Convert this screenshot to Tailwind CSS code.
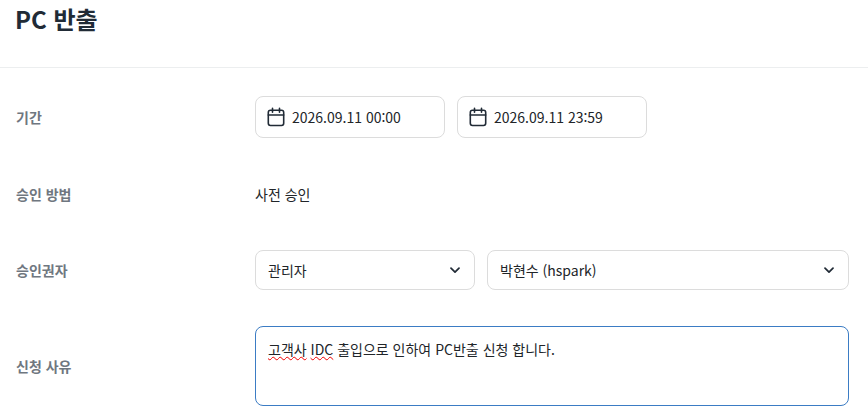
<!DOCTYPE html>
<html lang="ko">
<head>
  <meta charset="UTF-8" />
  <meta name="viewport" content="width=device-width, initial-scale=1.0" />
  <title>PC 반출</title>
  <script src="https://cdn.jsdelivr.net/npm/@tailwindcss/browser@4"></script>
</head>
<body class="bg-white h-[418px] overflow-hidden font-['Noto_Sans_CJK_KR','Noto_Sans',sans-serif] text-[14px] text-[#212529]">
  <!-- Header -->
  <div class="h-[68px] border-b border-[#eceeef] pl-4">
    <h1 class="pt-[1px] -ml-[1px] text-[24px] leading-9 font-bold text-[#212b36]">PC 반출</h1>
  </div>

  <!-- Form -->
  <div class="pt-7 pl-4 pr-[19px] flex flex-col gap-9">
    <div class="grid grid-cols-[239px_1fr] items-center">
      <div class="text-[14px] font-bold text-[#6f7780]">기간</div>
      <div class="flex gap-3">
        <div class="w-[190px] h-[42px] flex items-center gap-[7px] pl-[11px] border border-[#dcdcdc] rounded-lg">
          <svg class="w-[18px] h-[20px]" viewBox="0 0 18 20" fill="none" stroke="#212b36" stroke-width="1.6" stroke-linecap="round" stroke-linejoin="round"><rect x="1.3" y="3.3" width="15.4" height="15.2" rx="2.2"/><path d="M1.3 8h15.4M5.5 1.2v4M12.5 1.2v4"/></svg>
          <span>2026.09.11 00:00</span>
        </div>
        <div class="w-[190px] h-[42px] flex items-center gap-[7px] pl-[11px] border border-[#dcdcdc] rounded-lg">
          <svg class="w-[18px] h-[20px]" viewBox="0 0 18 20" fill="none" stroke="#212b36" stroke-width="1.6" stroke-linecap="round" stroke-linejoin="round"><rect x="1.3" y="3.3" width="15.4" height="15.2" rx="2.2"/><path d="M1.3 8h15.4M5.5 1.2v4M12.5 1.2v4"/></svg>
          <span>2026.09.11 23:59</span>
        </div>
      </div>
    </div>

    <div class="grid grid-cols-[239px_1fr] items-center h-10">
      <div class="text-[14px] font-bold text-[#6f7780]">승인 방법</div>
      <div>사전 승인</div>
    </div>

    <div class="grid grid-cols-[239px_1fr] items-center">
      <div class="text-[14px] font-bold text-[#6f7780]">승인권자</div>
      <div class="flex gap-3">
        <div class="w-[220px] h-10 flex items-center justify-between pl-3 pr-[14px] border border-[#dcdcdc] rounded-lg">
          <span>관리자</span>
          <svg class="w-[10px] h-[7px]" viewBox="0 0 10 7" fill="none" stroke="#212b36" stroke-width="1.7" stroke-linecap="round" stroke-linejoin="round"><path d="M1 1.2 5 5.2l4-4"/></svg>
        </div>
        <div class="flex-1 h-10 flex items-center justify-between pl-3 pr-[14px] border border-[#dcdcdc] rounded-lg">
          <span>박현수 (hspark)</span>
          <svg class="w-[10px] h-[7px]" viewBox="0 0 10 7" fill="none" stroke="#212b36" stroke-width="1.7" stroke-linecap="round" stroke-linejoin="round"><path d="M1 1.2 5 5.2l4-4"/></svg>
        </div>
      </div>
    </div>

    <div class="grid grid-cols-[239px_1fr] items-center">
      <div class="text-[14px] font-bold text-[#6f7780]">신청 사유</div>
      <div class="h-20 px-3 py-[12px] leading-[21px] border border-[#3b7cc4] rounded-lg">
        <span class="underline decoration-wavy decoration-[#f00000] decoration-1">고객사</span> <span class="underline decoration-wavy decoration-[#f00000] decoration-1">IDC</span> 출입으로 인하여 PC반출 신청 합니다.
      </div>
    </div>
  </div>
</body>
</html>
